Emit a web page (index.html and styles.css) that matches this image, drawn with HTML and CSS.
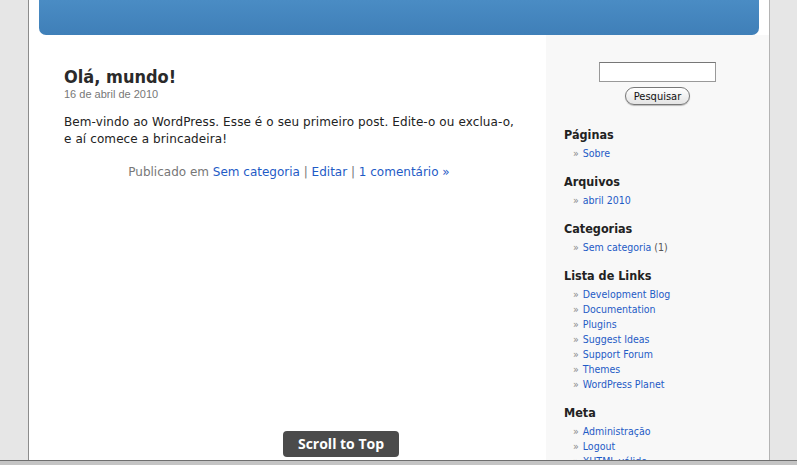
FILE: index.html
```html
<!DOCTYPE html>
<html lang="pt-BR">
<head>
<meta charset="utf-8">
<title>Olá, mundo!</title>
<link rel="stylesheet" href="styles.css">
</head>
<body>
<div class="page">
  <div class="header"></div>
  <div class="main">
    <div class="content">
      <div class="post">
        <h2 class="post-title">Olá, mundo!</h2>
        <div class="post-date">16 de abril de 2010</div>
        <p class="post-body">Bem-vindo ao WordPress. Esse é o seu primeiro post. Edite-o ou exclua-o, e aí comece a brincadeira!</p>
        <p class="post-meta">Publicado em <a href="#">Sem categoria</a> | <a href="#">Editar</a> | <a href="#">1 comentário »</a></p>
      </div>
    </div>
    <div class="sidebar">
      <form class="search">
        <input class="search-input" type="text">
        <button class="search-btn" type="button">Pesquisar</button>
      </form>
      <div class="widget">
        <h3>Páginas</h3>
        <ul><li><a href="#">Sobre</a></li></ul>
      </div>
      <div class="widget">
        <h3>Arquivos</h3>
        <ul><li><a href="#">abril 2010</a></li></ul>
      </div>
      <div class="widget">
        <h3>Categorias</h3>
        <ul><li><a href="#">Sem categoria</a> (1)</li></ul>
      </div>
      <div class="widget">
        <h3>Lista de Links</h3>
        <ul>
          <li><a href="#">Development Blog</a></li>
          <li><a href="#">Documentation</a></li>
          <li><a href="#">Plugins</a></li>
          <li><a href="#">Suggest Ideas</a></li>
          <li><a href="#">Support Forum</a></li>
          <li><a href="#">Themes</a></li>
          <li><a href="#">WordPress Planet</a></li>
        </ul>
      </div>
      <div class="widget">
        <h3>Meta</h3>
        <ul>
          <li><a href="#">Administração</a></li>
          <li><a href="#">Logout</a></li>
          <li><a href="#">XHTML válido</a></li>
        </ul>
      </div>
    </div>
  </div>
</div>
<a class="scroll-top" href="#">Scroll to Top</a>
<div class="bottom-bar"></div>
</body>
</html>
```
FILE: styles.css
```css
html, body {
  margin: 0;
  padding: 0;
  height: 100%;
  overflow: hidden;
}
body {
  background: #e6e6e6;
  font-family: "DejaVu Sans", Verdana, sans-serif;
  color: #333;
}
a {
  color: #1f5bc6;
  text-decoration: none;
}
.page {
  margin-left: 28px;
  width: 740px;
  min-height: 100%;
  background: #fff;
  border-left: 1px solid #8c8c8c;
  border-right: 1px solid #b4b4b4;
}
.header {
  margin: 0 10px;
  height: 35px;
  border-radius: 0 0 7px 7px;
  background: linear-gradient(#4a8cc4, #3f7fb8);
}
.main {
  display: flex;
  min-height: 430px;
}
.content {
  width: 450px;
  padding: 30px 32px 0 35px;
}
.post-title {
  margin: 0;
  font-family: "DejaVu Sans Condensed", "DejaVu Sans", sans-serif;
  font-size: 18px;
  line-height: 23px;
  font-weight: bold;
  color: #2a2a2a;
}
.post-date {
  font-family: "Liberation Sans", Arial, sans-serif;
  font-size: 11px;
  line-height: 13px;
  color: #777;
}
.post-body {
  margin: 13px 0 0;
  font-size: 12px;
  line-height: 17px;
  letter-spacing: 0.1px;
  color: #222;
}
.post-meta {
  margin: 16px 0 0;
  text-align: center;
  font-size: 12px;
  line-height: 17px;
  color: #777;
}
.sidebar {
  width: 205px;
  background: #f8f8f8;
  padding: 27px 0 0 18px;
  font-family: "DejaVu Sans Condensed", "DejaVu Sans", sans-serif;
  font-size: 10.5px;
}
.search {
  display: flex;
  flex-direction: column;
  align-items: center;
  margin-left: -18px;
  gap: 5px;
}
.search-input {
  width: 111px;
  height: 16px;
  border: 1px solid #999;
  border-top-color: #777;
  padding: 1px 2px;
  margin: 0;
  background: #fff;
}
.search-btn {
  height: 18px;
  padding: 0 8px;
  border: 1px solid #777;
  border-radius: 9px;
  background: linear-gradient(#ffffff, #e4e4e4);
  font-family: "DejaVu Sans Condensed", "DejaVu Sans", sans-serif;
  font-size: 11px;
  color: #111;
  box-shadow: 0 1px 1px rgba(0,0,0,0.25);
}
.widget {
  margin-top: 22px;
}
.widget h3 {
  margin: 0;
  font-size: 12.5px;
  line-height: 16px;
  font-weight: bold;
  color: #222;
}
.widget ul {
  list-style: none;
  margin: 3px 0 0;
  padding: 0 0 0 9px;
}
.widget li {
  line-height: 15px;
  color: #555;
}
.widget li::before {
  content: "»";
  color: #888;
  margin-right: 4px;
}
.widget + .widget {
  margin-top: 13px;
}
.scroll-top {
  position: fixed;
  left: 283px;
  top: 431px;
  width: 116px;
  height: 26px;
  border-radius: 4px;
  background: #4b4b4b;
  color: #fff;
  font-family: "Open Sans", "DejaVu Sans", sans-serif;
  font-weight: bold;
  font-size: 14px;
  line-height: 26px;
  text-align: center;
}
.bottom-bar {
  position: fixed;
  left: 0;
  right: 0;
  bottom: 0;
  height: 4px;
  border-top: 1px solid #6e6e6e;
  background: #c4c4c4;
}
```
